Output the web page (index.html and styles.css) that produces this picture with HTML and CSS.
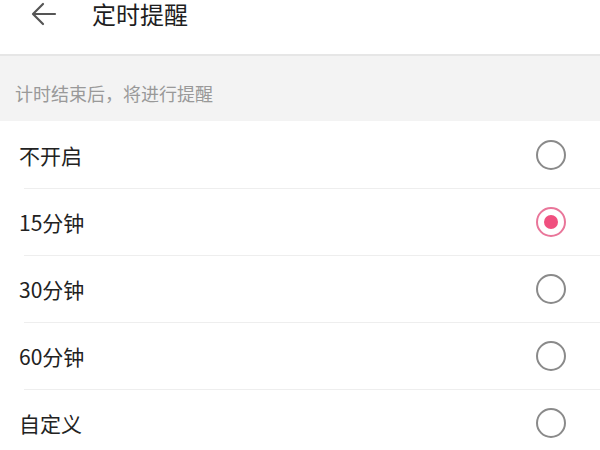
FILE: index.html
```html
<!DOCTYPE html>
<html lang="zh">
<head>
<meta charset="utf-8">
<link rel="stylesheet" href="styles.css">
</head>
<body>
<div class="page">
  <header class="topbar">
    <svg class="back" width="26" height="24" viewBox="0 0 26 24">
      <path d="M24 12H3M12 2L2 12l10 10" fill="none" stroke="#555" stroke-width="2.2" stroke-linecap="round" stroke-linejoin="round"/>
    </svg>
    <h1 class="title">定时提醒</h1>
  </header>
  <div class="hint">计时结束后，将进行提醒</div>
  <ul class="list">
    <li class="item"><span class="label">不开启</span><span class="radio"></span></li>
    <li class="item"><span class="label">15分钟</span><span class="radio on"></span></li>
    <li class="item"><span class="label">30分钟</span><span class="radio"></span></li>
    <li class="item"><span class="label">60分钟</span><span class="radio"></span></li>
    <li class="item"><span class="label">自定义</span><span class="radio"></span></li>
  </ul>
</div>
</body>
</html>
```

FILE: styles.css
```css
* { box-sizing: border-box; }
html, body { margin: 0; padding: 0; }
body {
  width: 600px;
  height: 450px;
  overflow: hidden;
  background: #fff;
  font-family: "Noto Sans CJK SC", "Noto Sans", sans-serif;
  color: #222;
}
.page { display: flex; flex-direction: column; }
.topbar {
  height: 56px;
  display: flex;
  align-items: flex-start;
  padding-left: 31px;
  background: #fff;
  border-bottom: 2px solid #e6e6e6;
  box-shadow: 0 1px 2px rgba(0,0,0,0.04);
}
.back { margin-top: 2px; flex: none; }
.title {
  margin: 0 0 0 35px;
  font-size: 24px;
  font-weight: 400;
  line-height: 27px;
  color: #1e1e1e;
}
.hint {
  height: 65px;
  background: #f3f3f3;
  color: #999999;
  font-size: 18px;
  padding: 24px 0 0 15px;
  line-height: 26px;
}
.list { list-style: none; margin: 0; padding: 0; }
.item {
  height: 67px;
  display: flex;
  align-items: center;
  justify-content: space-between;
  padding: 0 34px 0 19px;
  position: relative;
}
.item + .item::before {
  content: "";
  position: absolute;
  left: 24px;
  right: 0;
  top: 0;
  height: 1px;
  background: #eeeeee;
}
.label { font-size: 21px; color: #222; }
.radio {
  width: 30px;
  height: 30px;
  border-radius: 50%;
  border: 2px solid #8a8a8a;
  display: flex;
  align-items: center;
  justify-content: center;
}
.radio.on { border-color: #e9769a; }
.radio.on::after {
  content: "";
  width: 14px;
  height: 14px;
  border-radius: 50%;
  background: #f0507f;
}
```
